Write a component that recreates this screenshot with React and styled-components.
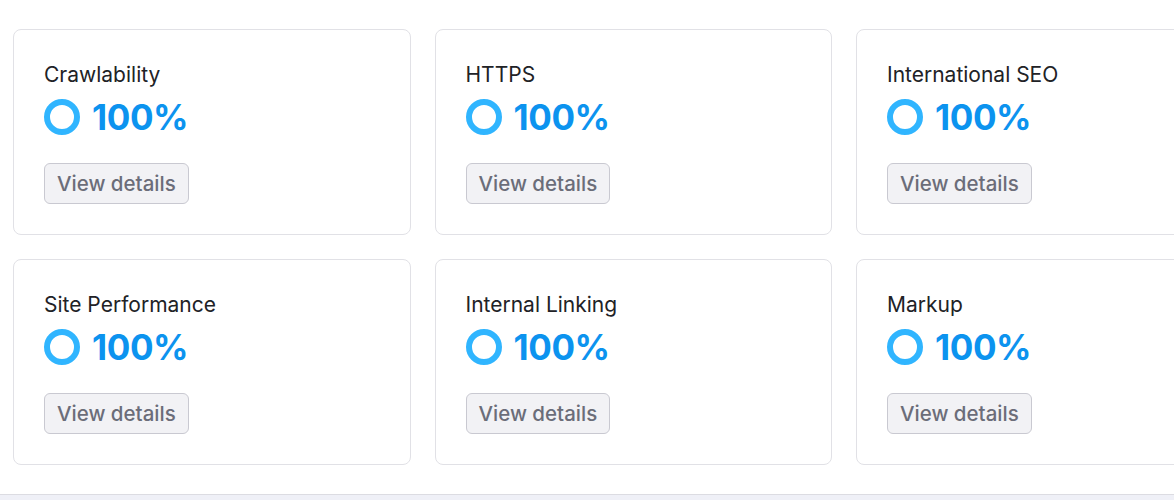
import React from "react";
import styled, { createGlobalStyle } from "styled-components";

const items = [
  "Crawlability",
  "HTTPS",
  "International SEO",
  "Site Performance",
  "Internal Linking",
  "Markup",
];

const Global = createGlobalStyle`
  html, body { margin: 0; padding: 0; background: #fff; }
  body { font-family: Inter, "Noto Sans", sans-serif; overflow: hidden; }
`;

const Page = styled.div`
  width: 1174px;
  height: 500px;
  overflow: hidden;
  display: flex;
  flex-direction: column;
  background: #fff;
`;

const Grid = styled.div`
  display: grid;
  grid-template-columns: repeat(3, 397.5px);
  align-content: start;
  gap: 24px 24px;
  padding: 29px 0 0 13px;
  flex: 1;
`;

const Card = styled.div`
  box-sizing: border-box;
  height: 206px;
  border: 1px solid #e1e1e6;
  border-radius: 8px;
  padding: 33px 30px 0 30px;
  display: flex;
  flex-direction: column;
  align-items: flex-start;
`;

const Title = styled.div`
  font-size: 21px;
  line-height: 24px;
  color: #212226;
`;

const Score = styled.div`
  display: flex;
  align-items: center;
  gap: 12px;
  margin-top: 9px;
  height: 42px;
`;

const Ring = styled.div`
  box-sizing: border-box;
  width: 36px;
  height: 36px;
  border-radius: 50%;
  border: 6px solid #30b5ff;
`;

const Value = styled.div`
  font-size: 35px;
  font-weight: 700;
  color: #0c93ef;
  letter-spacing: -0.4px;
`;

const Button = styled.button`
  margin-top: 25px;
  box-sizing: border-box;
  height: 41px;
  padding: 0 12px;
  border: 1px solid #c9c9d1;
  border-radius: 6px;
  background: #f2f2f5;
  color: #6b6d79;
  font-family: Inter, "Noto Sans", sans-serif;
  font-size: 20.5px;
  font-weight: 500;
`;

const Footer = styled.div`
  height: 5px;
  border-top: 1px solid #dcdce2;
  background: #eff0f7;
`;

export default function App() {
  return (
    <Page>
      <Global />
      <Grid>
        {items.map((t) => (
          <Card key={t}>
            <Title>{t}</Title>
            <Score>
              <Ring />
              <Value>100%</Value>
            </Score>
            <Button>View details</Button>
          </Card>
        ))}
      </Grid>
      <Footer />
    </Page>
  );
}
